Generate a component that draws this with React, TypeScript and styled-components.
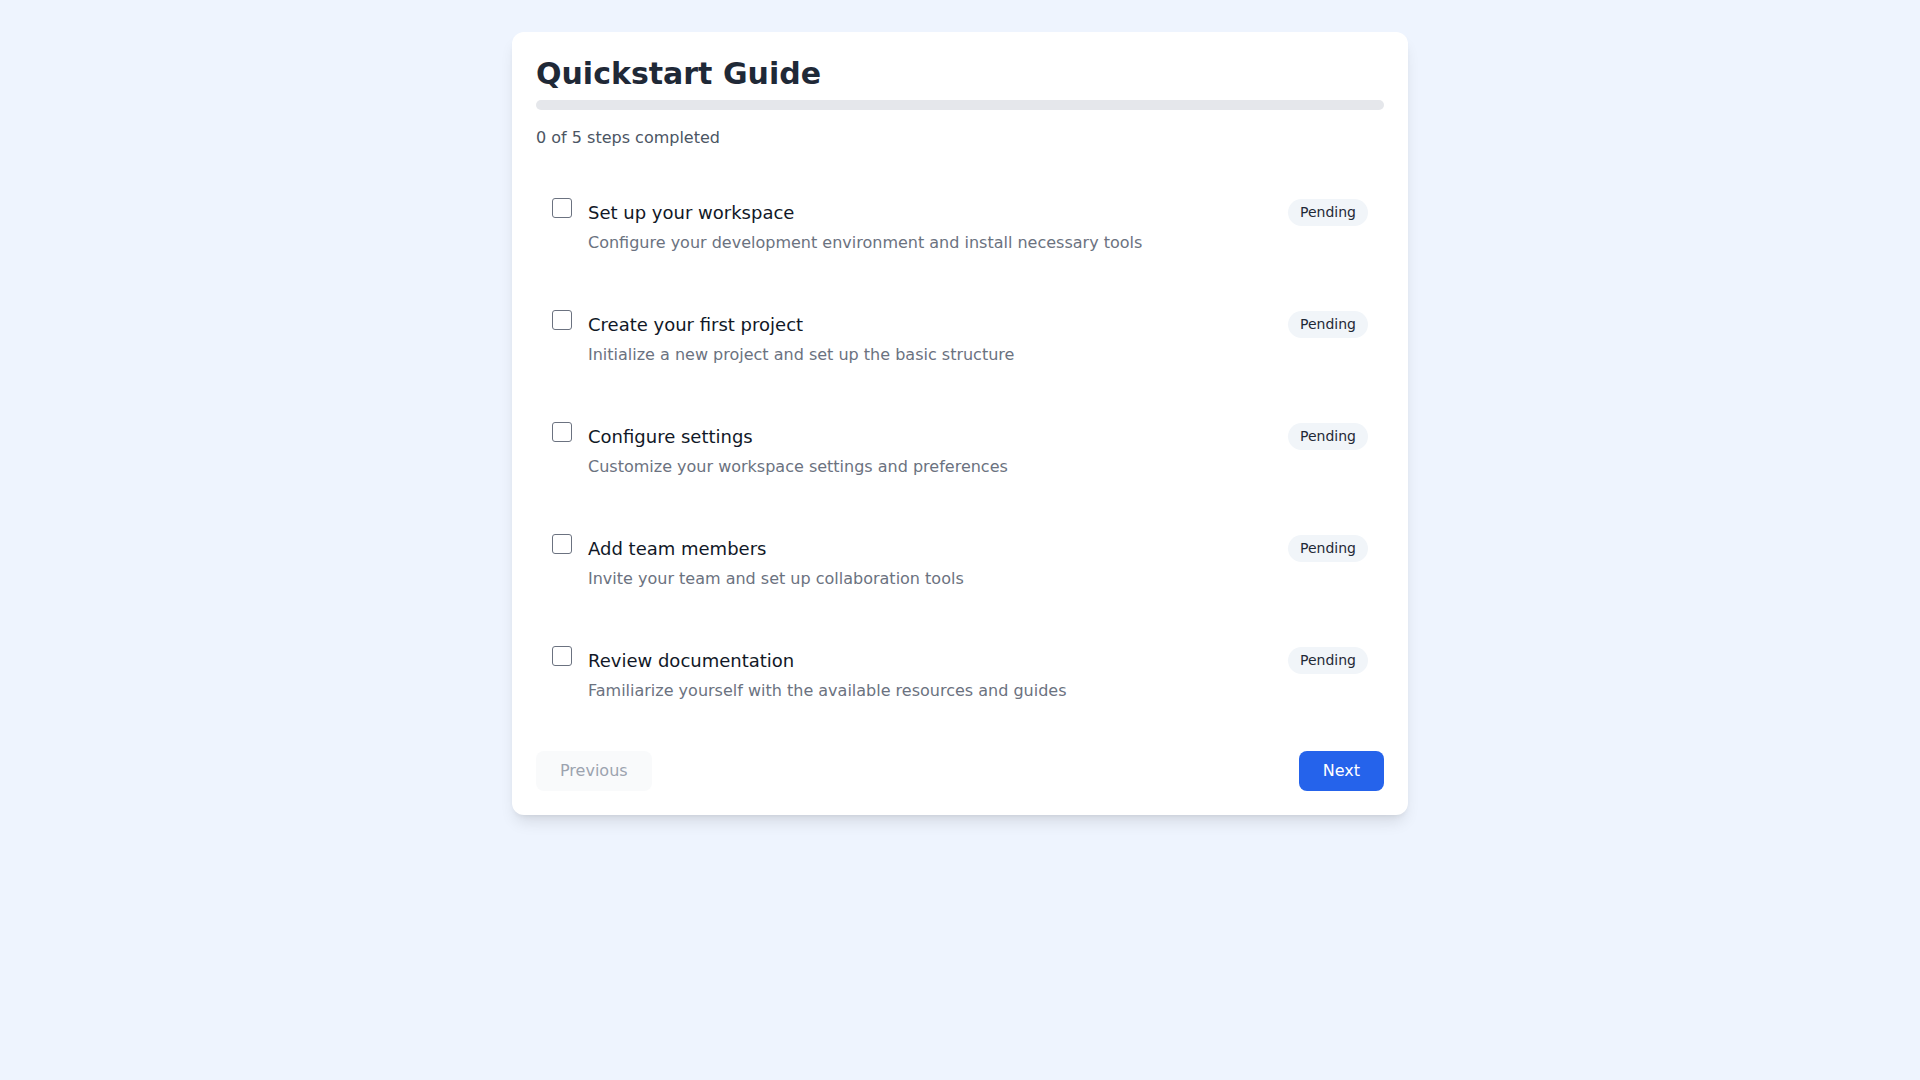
import React, { useState } from "react";
import styled, { createGlobalStyle } from "styled-components";

const GlobalStyle = createGlobalStyle`
  * { box-sizing: border-box; }
  body {
    margin: 0;
    font-family: "DejaVu Sans", Verdana, sans-serif;
    background: #eef4fe;
  }
`;

const Page = styled.div`
  min-height: 100vh;
  padding: 32px 16px;
  background: #eef4fe;
`;

const Card = styled.div`
  max-width: 896px;
  margin: 0 auto;
  background: #ffffff;
  border-radius: 12px;
  padding: 24px;
  box-shadow: 0 10px 15px -3px rgba(0, 0, 0, 0.1), 0 4px 6px -4px rgba(0, 0, 0, 0.1);
`;

const Title = styled.h1`
  margin: 0;
  font-size: 30px;
  line-height: 36px;
  font-weight: 700;
  color: #1f2937;
`;

const Track = styled.div`
  margin-top: 8px;
  height: 10px;
  border-radius: 9999px;
  background: #e5e7eb;
  overflow: hidden;
`;

const Fill = styled.div`
  height: 100%;
  background: #2563eb;
  border-radius: 9999px;
`;

const Count = styled.p`
  margin: 16px 0 0;
  font-size: 16px;
  line-height: 24px;
  color: #4b5563;
`;

const List = styled.ul`
  list-style: none;
  margin: 33px 0 0;
  padding: 0;
  display: flex;
  flex-direction: column;
  gap: 24px;
`;

const Item = styled.li`
  display: flex;
  align-items: flex-start;
  gap: 16px;
  padding: 16px;
  border-radius: 8px;
`;

const Check = styled.input`
  appearance: none;
  flex: none;
  width: 20px;
  height: 20px;
  margin: -1px 0 0;
  border: 1px solid #6b7280;
  border-radius: 3px;
  background: #ffffff;
  cursor: pointer;

  &:checked {
    background: #2563eb;
    border-color: #2563eb;
  }
`;

const Body = styled.div`
  flex: 1;
`;

const StepTitle = styled.div`
  font-size: 18px;
  line-height: 28px;
  color: #111827;
`;

const StepDesc = styled.div`
  margin-top: 4px;
  font-size: 16px;
  line-height: 24px;
  color: #6b7280;
`;

const Badge = styled.span<{ $done: boolean }>`
  flex: none;
  padding: 4px 12px;
  border-radius: 9999px;
  font-size: 14px;
  line-height: 19px;
  background: ${(p) => (p.$done ? "#dcfce7" : "#f1f5f9")};
  color: ${(p) => (p.$done ? "#166534" : "#1f2937")};
`;

const Footer = styled.div`
  display: flex;
  justify-content: space-between;
  margin-top: 32px;
`;

const Button = styled.button<{ $primary?: boolean }>`
  font-family: inherit;
  font-size: 16px;
  line-height: 24px;
  padding: 8px 24px;
  border: none;
  border-radius: 8px;
  cursor: pointer;
  background: ${(p) => (p.$primary ? "#2563eb" : "#f9fafb")};
  color: ${(p) => (p.$primary ? "#ffffff" : "#9ca3af")};

  &:disabled {
    cursor: not-allowed;
  }
`;

const steps = [
  { title: "Set up your workspace", desc: "Configure your development environment and install necessary tools" },
  { title: "Create your first project", desc: "Initialize a new project and set up the basic structure" },
  { title: "Configure settings", desc: "Customize your workspace settings and preferences" },
  { title: "Add team members", desc: "Invite your team and set up collaboration tools" },
  { title: "Review documentation", desc: "Familiarize yourself with the available resources and guides" },
];

export default function App() {
  const [done, setDone] = useState<boolean[]>(steps.map(() => false));
  const completed = done.filter(Boolean).length;

  const toggle = (i: number) => setDone((d) => d.map((v, j) => (j === i ? !v : v)));

  return (
    <Page>
      <GlobalStyle />
      <Card>
        <Title>Quickstart Guide</Title>
        <Track>
          <Fill style={{ width: `${(completed / steps.length) * 100}%` }} />
        </Track>
        <Count>
          {completed} of {steps.length} steps completed
        </Count>
        <List>
          {steps.map((s, i) => (
            <Item key={s.title}>
              <Check type="checkbox" checked={done[i]} onChange={() => toggle(i)} />
              <Body>
                <StepTitle>{s.title}</StepTitle>
                <StepDesc>{s.desc}</StepDesc>
              </Body>
              <Badge $done={done[i]}>{done[i] ? "Done" : "Pending"}</Badge>
            </Item>
          ))}
        </List>
        <Footer>
          <Button disabled>Previous</Button>
          <Button $primary>Next</Button>
        </Footer>
      </Card>
    </Page>
  );
}
